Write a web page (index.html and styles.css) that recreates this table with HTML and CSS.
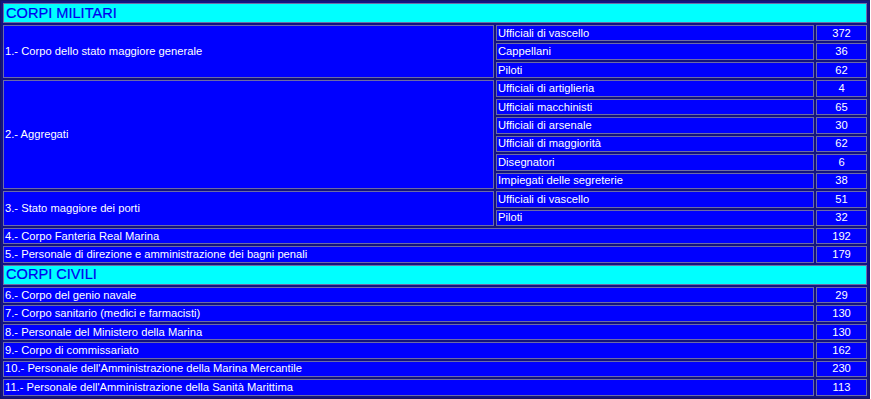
FILE: index.html
```html
<!DOCTYPE html>
<html lang="it">
<head>
<meta charset="utf-8">
<title>Corpi</title>
<link rel="stylesheet" href="styles.css">
</head>
<body>
<table class="corpi">
  <colgroup>
    <col class="c1"><col class="c2"><col class="c3">
  </colgroup>
  <tbody>
    <tr class="hrow"><td class="head" colspan="3">CORPI MILITARI</td></tr>
    <tr><td class="lbl" rowspan="3">1.- Corpo dello stato maggiore generale</td><td class="sub">Ufficiali di vascello</td><td class="num">372</td></tr>
    <tr><td class="sub">Cappellani</td><td class="num">36</td></tr>
    <tr><td class="sub">Piloti</td><td class="num">62</td></tr>
    <tr><td class="lbl" rowspan="6">2.- Aggregati</td><td class="sub">Ufficiali di artiglieria</td><td class="num">4</td></tr>
    <tr><td class="sub">Ufficiali macchinisti</td><td class="num">65</td></tr>
    <tr><td class="sub">Ufficiali di arsenale</td><td class="num">30</td></tr>
    <tr><td class="sub">Ufficiali di maggiorità</td><td class="num">62</td></tr>
    <tr><td class="sub">Disegnatori</td><td class="num">6</td></tr>
    <tr><td class="sub">Impiegati delle segreterie</td><td class="num">38</td></tr>
    <tr><td class="lbl" rowspan="2">3.- Stato maggiore dei porti</td><td class="sub">Ufficiali di vascello</td><td class="num">51</td></tr>
    <tr><td class="sub">Piloti</td><td class="num">32</td></tr>
    <tr><td class="lbl" colspan="2">4.- Corpo Fanteria Real Marina</td><td class="num">192</td></tr>
    <tr><td class="lbl" colspan="2">5.- Personale di direzione e amministrazione dei bagni penali</td><td class="num">179</td></tr>
    <tr class="hrow"><td class="head" colspan="3">CORPI CIVILI</td></tr>
    <tr><td class="lbl" colspan="2">6.- Corpo del genio navale</td><td class="num">29</td></tr>
    <tr><td class="lbl" colspan="2">7.- Corpo sanitario (medici e farmacisti)</td><td class="num">130</td></tr>
    <tr><td class="lbl" colspan="2">8.- Personale del Ministero della Marina</td><td class="num">130</td></tr>
    <tr><td class="lbl" colspan="2">9.- Corpo di commissariato</td><td class="num">162</td></tr>
    <tr><td class="lbl" colspan="2">10.- Personale dell'Amministrazione della Marina Mercantile</td><td class="num">230</td></tr>
    <tr><td class="lbl" colspan="2">11.- Personale dell'Amministrazione della Sanità Marittima</td><td class="num">113</td></tr>
  </tbody>
</table>
</body>
</html>
```

FILE: styles.css
```css
html, body {
  margin: 0;
  padding: 0;
  background: #ffffff;
}

.corpi {
  width: 870px;
  table-layout: fixed;
  border-collapse: separate;
  border-spacing: 2px;
  border: 1px solid #141466;
  background: #141480;
  font-family: "Liberation Sans", Arial, sans-serif;
  font-size: 11.2px;
  color: #ffffff;
}

.c1 { width: 491px; }
.c2 { width: 318px; }
.c3 { width: 51px; }

.corpi td {
  border: 1px solid #6c6ca6;
  background: #0000ff;
  padding: 0 1px;
  height: 14.46px;
  line-height: 13px;
  vertical-align: middle;
  white-space: nowrap;
  overflow: hidden;
}

.corpi td.head {
  background: #00ffff;
  color: #0000ee;
  font-size: 14.6px;
  height: 18px;
  padding-left: 2px;
  -webkit-text-stroke: 0.2px #0000ee;
}

.corpi td.num {
  text-align: center;
}
```
